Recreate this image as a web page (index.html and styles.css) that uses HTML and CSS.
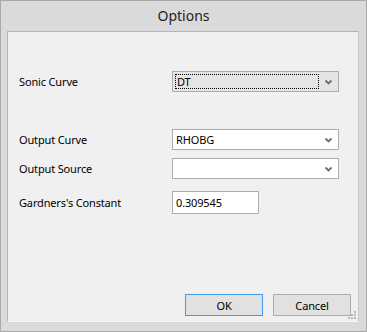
FILE: index.html
```html
<!DOCTYPE html>
<html lang="en">
<head>
    <meta charset="UTF-8">
    <title>Options</title>
    <link rel="stylesheet" href="styles.css">
</head>
<body>
    <div class="window">
        <div class="titlebar">Options</div>

        <div class="client">
            <!-- Curve settings -->
            <div class="row row-sonic">
                <label class="label">Sonic Curve</label>
                <div class="combo combo-focus">
                    <span class="combo-text"><span class="focus-rect">DT</span></span>
                    <svg class="chevron" width="9" height="6" viewBox="0 0 9 6"><path d="M1.5 1.5 L4.5 4.5 L7.5 1.5" fill="none" stroke="#6d6d6d" stroke-width="1.8"/></svg>
                </div>
            </div>

            <div class="row row-output">
                <label class="label">Output Curve</label>
                <div class="combo">
                    <span class="combo-text">RHOBG</span>
                    <svg class="chevron" width="9" height="6" viewBox="0 0 9 6"><path d="M1.5 1.5 L4.5 4.5 L7.5 1.5" fill="none" stroke="#6d6d6d" stroke-width="1.8"/></svg>
                </div>
            </div>

            <div class="row row-source">
                <label class="label">Output Source</label>
                <div class="combo">
                    <span class="combo-text"></span>
                    <svg class="chevron" width="9" height="6" viewBox="0 0 9 6"><path d="M1.5 1.5 L4.5 4.5 L7.5 1.5" fill="none" stroke="#6d6d6d" stroke-width="1.8"/></svg>
                </div>
            </div>

            <div class="row row-constant">
                <label class="label">Gardners's Constant</label>
                <input class="textbox" type="text" value="0.309545">
            </div>

            <!-- Dialog buttons -->
            <div class="buttons">
                <button class="btn btn-default">OK</button>
                <button class="btn">Cancel</button>
            </div>

            <div class="grip">
                <span class="dot d1"></span>
                <span class="dot d2"></span>
                <span class="dot d3"></span>
                <span class="dot d4"></span>
                <span class="dot d5"></span>
                <span class="dot d6"></span>
            </div>
        </div>
    </div>
</body>
</html>
```

FILE: styles.css
```css
/* Dialog window */
body {
    margin: 0;
    padding: 0;
    font-family: "Noto Sans", sans-serif;
    font-size: 11px;
    letter-spacing: -0.15px;
    color: #000;
}

.window {
    width: 367px;
    height: 332px;
    box-sizing: border-box;
    border: 1px solid #a9a9a9;
    background-color: #dadada;
    display: flex;
    flex-direction: column;
}

.titlebar {
    height: 30px;
    line-height: 30px;
    text-align: center;
    font-size: 14px;
    letter-spacing: 0;
    color: #222;
}

.client {
    position: relative;
    flex: 1;
    margin: 0 7px 9px 6px;
    box-sizing: border-box;
    border: 1px solid #b4b4b4;
    border-right-color: #c8c8c8;
    border-bottom-color: #f8f8f8;
    background-color: #f0f0f0;
    display: flex;
    flex-direction: column;
    padding: 39px 0 0 11px;
}

.row {
    display: flex;
    align-items: center;
}

.label {
    width: 153px;
}

.row-output {
    margin-top: 37px;
}

.row-source {
    margin-top: 8px;
}

.row-constant {
    margin-top: 12px;
}

/* Combo boxes */
.combo {
    width: 167px;
    height: 21px;
    box-sizing: border-box;
    border: 1px solid #acacac;
    background-color: #fff;
    display: flex;
    align-items: center;
    justify-content: space-between;
    padding: 0 5px 0 2px;
}

.combo-focus {
    background-color: #e5e5e5;
    padding-left: 1px;
}

.combo-text {
    flex: 1;
    height: 15px;
    line-height: 15px;
    padding-left: 1px;
}

.focus-rect {
    display: block;
    width: 144px;
    height: 15px;
    box-sizing: border-box;
    border: 1px dotted #000;
    padding-left: 1px;
    line-height: 13px;
}

.chevron {
    flex: none;
}

.textbox {
    width: 87px;
    height: 23px;
    box-sizing: border-box;
    border: 1px solid #abadb3;
    background-color: #fff;
    font-family: "Noto Sans", sans-serif;
    font-size: 11px;
    letter-spacing: -0.15px;
    padding: 0 3px;
    margin: 0;
    outline: none;
}

/* Buttons */
.buttons {
    margin-top: auto;
    margin-bottom: 5px;
    display: flex;
    justify-content: flex-end;
    gap: 10px;
    padding-right: 7px;
}

.btn {
    width: 78px;
    height: 22px;
    box-sizing: border-box;
    border: 1px solid #adadad;
    background-color: #e1e1e1;
    font-family: "Noto Sans", sans-serif;
    font-size: 11px;
    letter-spacing: -0.15px;
    color: #000;
    padding: 0;
}

.btn-default {
    border-color: #3c9cf0;
}

/* Size grip */
.grip {
    position: absolute;
    right: 1px;
    bottom: 1px;
    width: 9px;
    height: 9px;
}

.dot {
    position: absolute;
    width: 2px;
    height: 2px;
    background-color: #b9b9b9;
}

.d1 { left: 6px; top: 0; }
.d2 { left: 3px; top: 3px; }
.d3 { left: 6px; top: 3px; }
.d4 { left: 0; top: 6px; }
.d5 { left: 3px; top: 6px; }
.d6 { left: 6px; top: 6px; }
```
